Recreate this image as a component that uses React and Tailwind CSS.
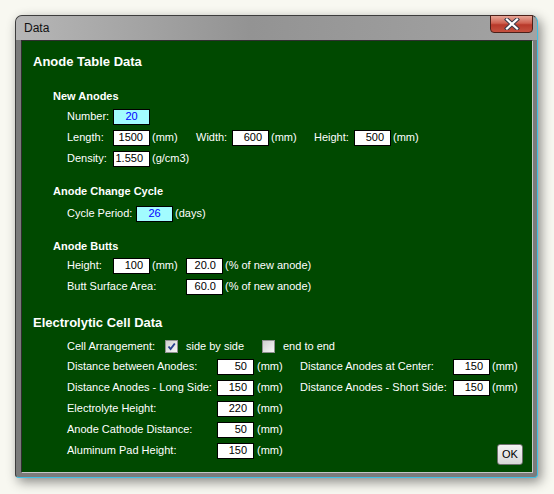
import React from "react";

// text box used for every numeric value in the dialog
function Box({ value, hi }) {
  return (
    <div
      className={
        "w-[37px] h-[16px] shrink-0 border border-black flex items-center leading-none " +
        (hi ? "bg-[#a2fcff] text-[#0000ff] justify-center" : "bg-white text-black justify-end pr-[6px]")
      }
    >
      {value}
    </div>
  );
}

function Check({ on }) {
  return (
    <div className="w-[13px] h-[13px] shrink-0 border border-[#8f9090] bg-[linear-gradient(135deg,#cfcfcf,#f7f7f7)] flex items-center justify-center">
      {on && (
        <svg width="11" height="11" viewBox="0 0 11 11">
          <path d="M2.5 5.5 L4.6 8 L8.8 2.5" fill="none" stroke="#27408f" strokeWidth="1.9" />
        </svg>
      )}
    </div>
  );
}

function Row({ h = "h-[21px]", children }) {
  return <div className={"flex items-center pl-[45px] " + h}>{children}</div>;
}

export default function App() {
  return (
    <div
      className="w-[554px] h-[494px] bg-[#f8f8f1] pt-[15px] pl-[15px] text-[11px] text-white"
      style={{ fontFamily: '"Liberation Sans", Arial, sans-serif' }}
    >
      <div className="relative w-[523px] h-[463px] flex flex-col rounded-t-[7px] rounded-b-[4px] bg-[#7b7b7b] border border-[#3d3d3d] border-r-[#3fbfe4] border-b-[#3fbfe4] shadow-[3px_4px_12px_rgba(0,0,0,0.45)]">
        {/* title bar */}
        <div className="h-[24px] shrink-0 flex items-center pl-[8px] rounded-t-[6px] bg-[linear-gradient(to_right,#b6b6b6,#939393_45%,#a3a3a3)] text-[12px] text-[#111]">
          Data
        </div>
        <div className="absolute right-[4px] -top-px w-[43px] h-[18px] rounded-b-[4px] border border-[#4a2019] bg-[linear-gradient(to_bottom,#e7a697,#cf6150_45%,#b8392a_55%,#c5513f)] flex items-center justify-center">
          <svg width="16" height="12" viewBox="0 0 16 12">
            <path d="M3 1.5 L13 10.5 M13 1.5 L3 10.5" stroke="#3b3b4a" strokeWidth="4.2" strokeLinecap="square" />
            <path d="M3 1.5 L13 10.5 M13 1.5 L3 10.5" stroke="#ffffff" strokeWidth="2.2" strokeLinecap="square" />
          </svg>
        </div>

        {/* client area */}
        <div className="flex-1 ml-[5px] mr-[4px] mb-[4px] bg-[#004900] border border-[#2f2f2f] border-r-[#c6c6c6] border-b-[#c6c6c6] flex flex-col">
          <div className="mt-[13px] pl-[11px] text-[13px] font-bold leading-[16px]">Anode Table Data</div>

          <div className="mt-[19px] pl-[31px] font-bold leading-[14px]">New Anodes</div>
          <div className="mt-[3px]">
            <Row>
              <span className="w-[46px]">Number:</span>
              <Box value="20" hi />
            </Row>
            <Row>
              <span className="w-[46px]">Length:</span>
              <Box value="1500" />
              <span className="w-[46px] pl-[2px]">(mm)</span>
              <span className="w-[36px]">Width:</span>
              <Box value="600" />
              <span className="w-[45px] pl-[2px]">(mm)</span>
              <span className="w-[40px]">Height:</span>
              <Box value="500" />
              <span className="pl-[2px]">(mm)</span>
            </Row>
            <Row>
              <span className="w-[46px]">Density:</span>
              <Box value="1.550" />
              <span className="pl-[2px]">(g/cm3)</span>
            </Row>
          </div>

          <div className="mt-[15px] pl-[31px] font-bold leading-[14px]">Anode Change Cycle</div>
          <div className="mt-[5px]">
            <Row>
              <span className="w-[69px]">Cycle Period:</span>
              <Box value="26" hi />
              <span className="pl-[2px]">(days)</span>
            </Row>
          </div>

          <div className="mt-[15px] pl-[31px] font-bold leading-[14px]">Anode Butts</div>
          <div className="mt-[2px]">
            <Row>
              <span className="w-[46px]">Height:</span>
              <Box value="100" />
              <span className="w-[36px] pl-[2px]">(mm)</span>
              <Box value="20.0" />
              <span className="pl-[2px]">(% of new anode)</span>
            </Row>
            <Row>
              <span className="w-[119px]">Butt Surface Area:</span>
              <Box value="60.0" />
              <span className="pl-[2px]">(% of new anode)</span>
            </Row>
          </div>

          <div className="mt-[18px] pl-[11px] text-[13px] font-bold leading-[16px]">Electrolytic Cell Data</div>
          <div className="mt-[5px]">
            <Row h="h-[20px]">
              <span className="w-[98px]">Cell Arrangement:</span>
              <Check on />
              <span className="w-[84px] pl-[8px]">side by side</span>
              <Check />
              <span className="pl-[8px]">end to end</span>
            </Row>
            <Row>
              <span className="w-[150px]">Distance between Anodes:</span>
              <Box value="50" />
              <span className="w-[46px] pl-[3px]">(mm)</span>
              <span className="w-[153px]">Distance Anodes at Center:</span>
              <Box value="150" />
              <span className="pl-[2px]">(mm)</span>
            </Row>
            <Row>
              <span className="w-[150px]">Distance Anodes - Long Side:</span>
              <Box value="150" />
              <span className="w-[46px] pl-[3px]">(mm)</span>
              <span className="w-[153px]">Distance Anodes - Short Side:</span>
              <Box value="150" />
              <span className="pl-[2px]">(mm)</span>
            </Row>
            <Row>
              <span className="w-[150px]">Electrolyte Height:</span>
              <Box value="220" />
              <span className="pl-[3px]">(mm)</span>
            </Row>
            <Row>
              <span className="w-[150px]">Anode Cathode Distance:</span>
              <Box value="50" />
              <span className="pl-[3px]">(mm)</span>
            </Row>
            <Row>
              <span className="w-[150px]">Aluminum Pad Height:</span>
              <Box value="150" />
              <span className="pl-[3px]">(mm)</span>
              <button className="ml-auto mr-[9px] mt-[8px] w-[26px] h-[21px] rounded-[3px] border border-[#707070] bg-[linear-gradient(to_bottom,#f4f4f4,#e6e6e6_50%,#d8d8d8)] text-black text-[11px] leading-none">
                OK
              </button>
            </Row>
          </div>
        </div>
      </div>
    </div>
  );
}
